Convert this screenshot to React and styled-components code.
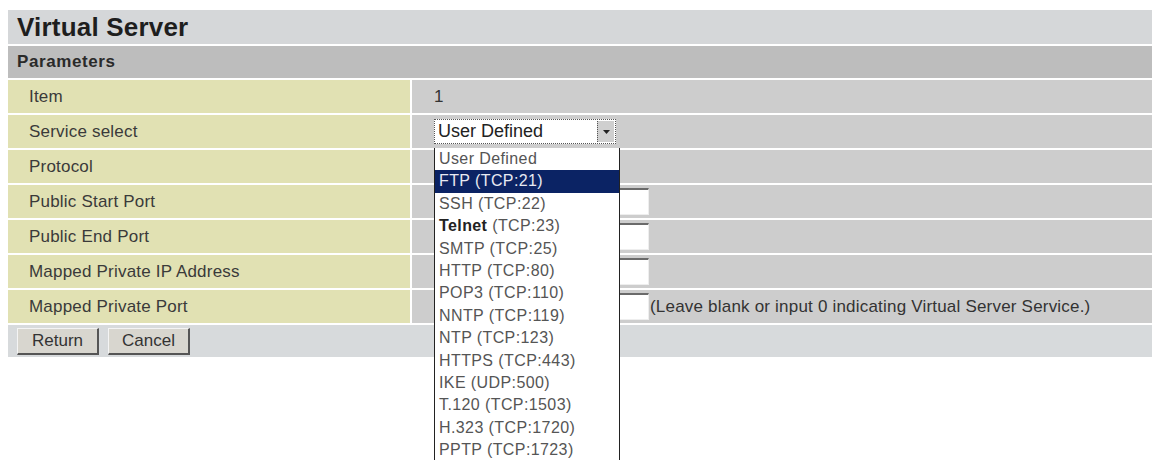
import React from 'react';
import styled, { createGlobalStyle } from 'styled-components';

const GlobalStyle = createGlobalStyle`
	html, body {
		margin: 0;
		padding: 0;
		background: #fff;
	}
	body {
		font-family: 'Liberation Sans', Arial, sans-serif;
		color: #333;
	}
`;

// name + port pairs for the service dropdown
const services = [
	['User Defined', ''],
	['FTP', '(TCP:21)'],
	['SSH', '(TCP:22)'],
	['Telnet', '(TCP:23)'],
	['SMTP', '(TCP:25)'],
	['HTTP', '(TCP:80)'],
	['POP3', '(TCP:110)'],
	['NNTP', '(TCP:119)'],
	['NTP', '(TCP:123)'],
	['HTTPS', '(TCP:443)'],
	['IKE', '(UDP:500)'],
	['T.120', '(TCP:1503)'],
	['H.323', '(TCP:1720)'],
	['PPTP', '(TCP:1723)'],
];

const App = () => {
	return (
		<Page>
			<GlobalStyle />
			<Panel>
				<Title>Virtual Server</Title>
				<Section>Parameters</Section>
				<Row>
					<Label>Item</Label>
					<Value>1</Value>
				</Row>
				<Row>
					<Label>Service select</Label>
					<Value>
						<SelectWrap>
							<SelectBox>
								<span>User Defined</span>
								<Arrow>
									<svg width='7' height='4' viewBox='0 0 7 4'>
										<path d='M0 0h7L3.5 4z' fill='#222' />
									</svg>
								</Arrow>
							</SelectBox>
							<List>
								{services.map(([name, port], i) => (
									<Option key={i} $active={i === 1}>
										<OptName $bold={name === 'Telnet'}>{name}</OptName>
										{port && ' ' + port}
									</Option>
								))}
							</List>
						</SelectWrap>
					</Value>
				</Row>
				<Row>
					<Label>Protocol</Label>
					<Value />
				</Row>
				<Row>
					<Label>Public Start Port</Label>
					<Value>
						<Field />
					</Value>
				</Row>
				<Row>
					<Label>Public End Port</Label>
					<Value>
						<Field />
					</Value>
				</Row>
				<Row>
					<Label>Mapped Private IP Address</Label>
					<Value>
						<Field />
					</Value>
				</Row>
				<Row>
					<Label>Mapped Private Port</Label>
					<Value>
						<Field />
						<Note>(Leave blank or input 0 indicating Virtual Server Service.)</Note>
					</Value>
				</Row>
				<Actions>
					<Button>Return</Button>
					<Button>Cancel</Button>
				</Actions>
			</Panel>
		</Page>
	);
};

export default App;

const Page = styled.div`
	box-sizing: border-box;
	width: 1156px;
	height: 460px;
	overflow: hidden;
	padding: 10px 4px 0 8px;
`;

const Panel = styled.div`
	display: flex;
	flex-direction: column;
	gap: 2px;
	width: 1144px;
`;

const Title = styled.div`
	height: 34px;
	display: flex;
	align-items: center;
	padding-left: 9px;
	background: #d5d7d9;
	font-size: 26px;
	font-weight: 700;
	letter-spacing: 0.2px;
	color: #1e1e1e;
`;

const Section = styled.div`
	height: 32px;
	display: flex;
	align-items: center;
	padding-left: 9px;
	background: #bdbdbd;
	font-size: 17px;
	font-weight: 700;
	letter-spacing: 0.6px;
	color: #2a2a2a;
`;

const Row = styled.div`
	display: grid;
	grid-template-columns: 402px 1fr;
	column-gap: 2px;
	height: 33px;
`;

const Label = styled.div`
	display: flex;
	align-items: center;
	padding-left: 21px;
	background: #e1e1b3;
	font-size: 17px;
	letter-spacing: 0.2px;
	color: #3a3a3a;
`;

const Value = styled.div`
	display: flex;
	align-items: center;
	padding-left: 22px;
	background: #cdcdcd;
	font-size: 17px;
	color: #333;
`;

const SelectWrap = styled.div`
	position: relative;
`;

const SelectBox = styled.div`
	display: flex;
	align-items: center;
	justify-content: space-between;
	width: 182px;
	height: 25px;
	box-sizing: border-box;
	background: #fff;
	border: 1px dotted #555;
	padding-left: 3px;
	font-size: 18px;
	color: #222;
`;

const Arrow = styled.div`
	display: flex;
	align-items: center;
	justify-content: center;
	width: 16px;
	height: 21px;
	margin-right: 1px;
	background: #cfcfcf;
	border-left: 1px dotted #555;
`;

const List = styled.div`
	position: absolute;
	left: 0;
	top: 29px;
	z-index: 5;
	width: 186px;
	box-sizing: border-box;
	background: #fff;
	border: 1px solid #222;
	border-top: none;
`;

const Option = styled.div`
	height: 22.4px;
	line-height: 22px;
	padding-left: 4px;
	font-size: 16px;
	letter-spacing: 0.4px;
	white-space: nowrap;
	background: ${(p) => (p.$active ? '#0b2364' : 'transparent')};
	color: ${(p) => (p.$active ? '#e8eaf2' : '#555')};
`;

const OptName = styled.span`
	font-weight: ${(p) => (p.$bold ? 700 : 400)};
	color: ${(p) => (p.$bold ? '#222' : 'inherit')};
`;

const Field = styled.div`
	width: 215px;
	height: 27px;
	flex-shrink: 0;
	box-sizing: border-box;
	background: #fff;
	border-top: 2px solid #6a6a6a;
	border-left: 2px solid #6a6a6a;
	border-right: 1px solid #eee;
	border-bottom: 1px solid #eee;
`;

const Note = styled.span`
	margin-left: 1px;
	font-size: 17px;
	color: #333;
	letter-spacing: 0.2px;
	white-space: nowrap;
`;

const Actions = styled.div`
	display: flex;
	align-items: center;
	gap: 9px;
	height: 32px;
	padding-left: 9px;
	background: #d7dadc;
`;

const Button = styled.div`
	display: flex;
	align-items: center;
	justify-content: center;
	width: 82px;
	height: 27px;
	box-sizing: border-box;
	background: #d8d6cf;
	border-top: 1px solid #f4f4f4;
	border-left: 1px solid #f4f4f4;
	border-right: 2px solid #555;
	border-bottom: 2px solid #555;
	font-size: 17px;
	color: #333;
`;
